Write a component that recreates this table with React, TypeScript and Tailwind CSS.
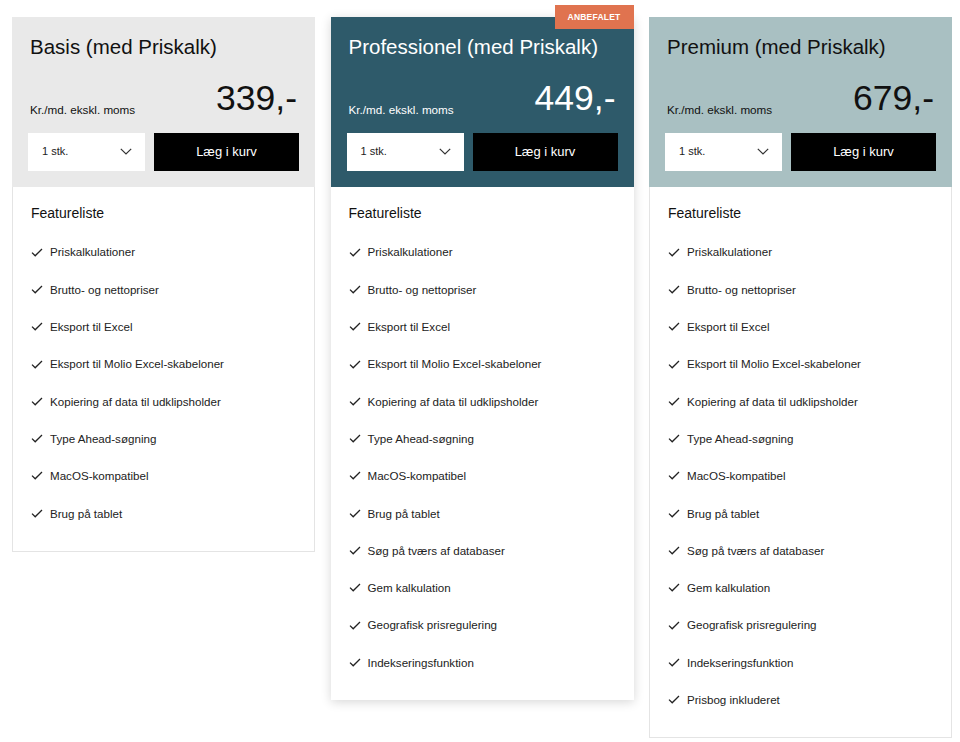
import React from "react";

type Plan = {
  name: string;
  price: string;
  headerClass: string;
  textClass: string;
  featured?: boolean;
  features: string[];
};

const base = [
  "Priskalkulationer",
  "Brutto- og nettopriser",
  "Eksport til Excel",
  "Eksport til Molio Excel-skabeloner",
  "Kopiering af data til udklipsholder",
  "Type Ahead-søgning",
  "MacOS-kompatibel",
  "Brug på tablet",
];

const pro = [
  ...base,
  "Søg på tværs af databaser",
  "Gem kalkulation",
  "Geografisk prisregulering",
  "Indekseringsfunktion",
];

const plans: Plan[] = [
  {
    name: "Basis (med Priskalk)",
    price: "339,-",
    headerClass: "bg-[#e9e9e9]",
    textClass: "text-[#111]",
    features: base,
  },
  {
    name: "Professionel (med Priskalk)",
    price: "449,-",
    headerClass: "bg-[#2e5a6a]",
    textClass: "text-white",
    featured: true,
    features: pro,
  },
  {
    name: "Premium (med Priskalk)",
    price: "679,-",
    headerClass: "bg-[#a9c0c2]",
    textClass: "text-[#111]",
    features: [...pro, "Prisbog inkluderet"],
  },
];

function Check() {
  return (
    <svg width="12" height="9" viewBox="0 0 12 9" fill="none" className="shrink-0">
      <path d="M1 4.6 L4.2 7.8 L11 1" stroke="#222" strokeWidth="1.3" />
    </svg>
  );
}

function Chevron() {
  return (
    <svg width="12" height="7" viewBox="0 0 12 7" fill="none">
      <path d="M0.8 0.8 L6 6 L11.2 0.8" stroke="#333" strokeWidth="1.2" />
    </svg>
  );
}

function PlanCard({ plan }: { plan: Plan }) {
  return (
    <div
      className={
        "relative w-[303px] bg-white " +
        (plan.featured ? "shadow-[0_2px_10px_rgba(0,0,0,0.16)]" : "")
      }
    >
      {plan.featured && (
        <div className="absolute right-0 top-[-12px] flex h-[24px] w-[79px] items-center justify-center bg-[#e0734f] text-[8.5px] font-bold tracking-[0.2px] text-white">
          ANBEFALET
        </div>
      )}
      <div className={plan.headerClass + " " + plan.textClass + " px-[16px] pb-[16px] pt-[16px]"}>
        <h2 className="pl-[2px] text-[20.5px] leading-[28px]">{plan.name}</h2>
        <div className="mt-[20px] flex items-end justify-between pl-[2px] pr-[2px]">
          <span className="text-[11.7px] leading-[14px]">Kr./md. ekskl. moms</span>
          <span className="text-[35.5px] leading-none">{plan.price}</span>
        </div>
        <div className="mt-[16px] flex gap-[9px]">
          <div className="flex h-[38px] w-[117px] items-center justify-between bg-white pl-[14px] pr-[13px] text-[11px] text-[#222]">
            <span>1 stk.</span>
            <Chevron />
          </div>
          <button className="h-[38px] flex-1 bg-black text-[13px] text-white">Læg i kurv</button>
        </div>
      </div>
      <div
        className={
          "px-[18px] pb-[19px] pt-[16px] " +
          (plan.featured ? "" : "border border-t-0 border-[#e4e4e4]")
        }
      >
        <h3 className="text-[14px] leading-[20px] text-[#111]">Featureliste</h3>
        <ul className="mt-[11px]">
          {plan.features.map((f) => (
            <li key={f} className="flex h-[37.3px] items-center gap-[7px] text-[11.6px] text-[#222]">
              <Check />
              <span>{f}</span>
            </li>
          ))}
        </ul>
      </div>
    </div>
  );
}

export default function App() {
  return (
    <div
      className="min-h-[742px] bg-white pl-[12px] pt-[17px]"
      style={{ fontFamily: '"Liberation Sans", Arial, sans-serif' }}
    >
      <div className="flex items-start gap-[15.5px]">
        {plans.map((p) => (
          <PlanCard key={p.name} plan={p} />
        ))}
      </div>
    </div>
  );
}
